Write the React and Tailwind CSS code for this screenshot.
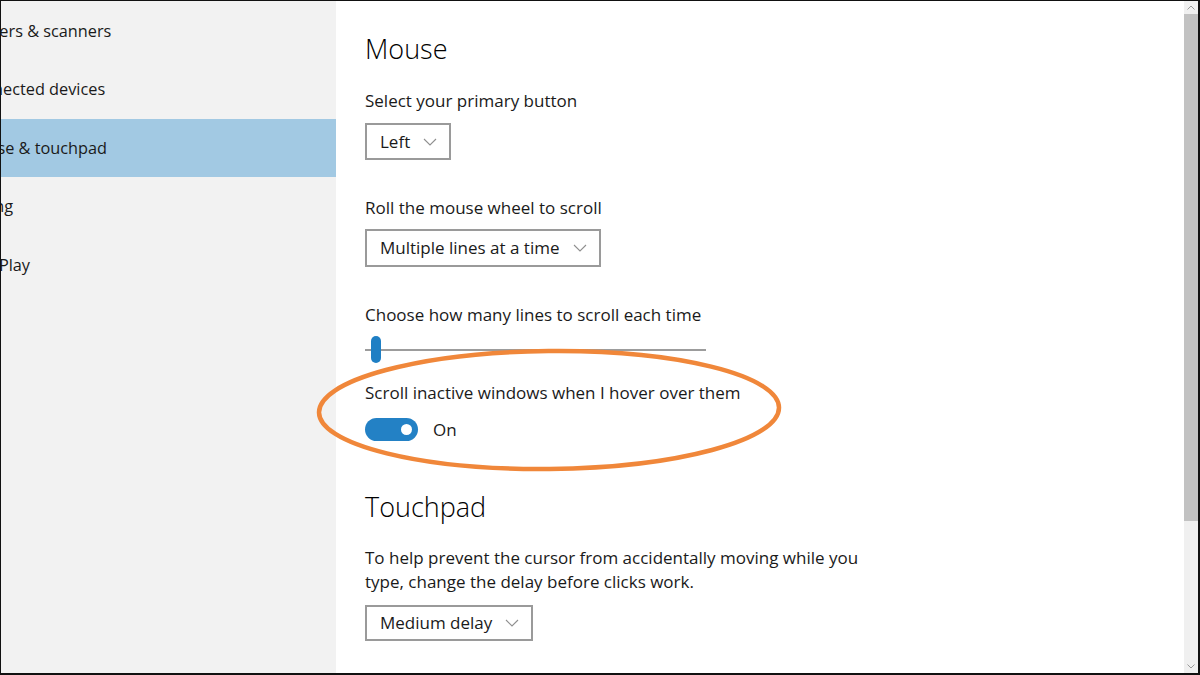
import React from 'react'

const font = { fontFamily: '"Open Sans", "Noto Sans", sans-serif' }

function Chevron() {
  return (
    <svg width="14" height="8" viewBox="0 0 14 8" className="shrink-0">
      <path d="M1 1 L7 7 L13 1" fill="none" stroke="#8f8f8f" strokeWidth="1.1" />
    </svg>
  )
}

function Dropdown({ label, className }) {
  return (
    <div className={`flex w-fit items-center gap-[13px] border-2 border-[#9a9a9a] pl-[13px] pr-[12px] text-[17px] text-[#1a1a1a] ${className}`}>
      <span>{label}</span>
      <Chevron />
    </div>
  )
}

const navItems = ['Printers & scanners', 'Connected devices', 'Mouse & touchpad', 'Typing', 'AutoPlay']

export default function App() {
  return (
    <div style={font} className="relative flex h-[675px] w-[1200px] overflow-hidden border-t border-l border-b-2 border-r-2 border-[#111] bg-white">
      {/* sidebar, scrolled off to the left */}
      <aside className="w-[335px] shrink-0 overflow-hidden bg-[#f2f2f2] pt-[1px]">
        {navItems.map((item, i) => (
          <div
            key={item}
            className={`flex h-[58.4px] items-center whitespace-nowrap text-[16.3px] text-[#1a1a1a] ${i === 2 ? 'bg-[#a2c9e3]' : ''}`}
          >
            <span className="-ml-[38px]">{item}</span>
          </div>
        ))}
      </aside>

      {/* main settings pane */}
      <main className="relative flex-1 pl-[29px] pt-[28px] text-[#1a1a1a]">
        <h1 className="text-[27px] font-light leading-[40px] text-black">Mouse</h1>

        <p className="mt-[19px] text-[17px] leading-[26px]">Select your primary button</p>
        <Dropdown label="Left" className="mt-[9px] h-[37px]" />

        <p className="mt-[35px] text-[17px] leading-[26px]">Roll the mouse wheel to scroll</p>
        <Dropdown label="Multiple lines at a time" className="mt-[8px] h-[38px]" />

        <p className="mt-[35px] text-[17px] leading-[26px]">Choose how many lines to scroll each time</p>
        <div className="relative mt-[8px] h-[28px] w-[341px]">
          <div className="absolute left-0 right-0 top-[13px] h-[2px] bg-[#9c9c9c]" />
          <div className="absolute left-[6px] top-0 h-[27px] w-[10px] rounded-full bg-[#1f7fc4]" />
        </div>

        <p className="mt-[16px] text-[17px] leading-[26px]">Scroll inactive windows when I hover over them</p>
        <div className="mt-[12px] flex h-[23px] items-center gap-[15px]">
          <div className="flex h-[23px] w-[53px] items-center justify-end rounded-full bg-[#2381c5] pr-[6px]">
            <div className="h-[11px] w-[11px] rounded-full bg-white" />
          </div>
          <span className="text-[17px] leading-[23px]">On</span>
        </div>

        <h2 className="mt-[46px] text-[27px] font-light leading-[40px] text-black">Touchpad</h2>
        <p className="mt-[19px] w-[510px] text-[17px] leading-[24px]">
          To help prevent the cursor from accidentally moving while you type, change the delay before clicks work.
        </p>
        <Dropdown label="Medium delay" className="mt-[11px] h-[36px]" />

        {/* hand-drawn highlight ring */}
        <svg className="pointer-events-none absolute left-[-22px] top-[345px]" width="472" height="130" viewBox="0 0 472 130">
          <ellipse cx="235" cy="64" rx="230" ry="59" fill="none" stroke="#f0873a" strokeWidth="4.5" transform="rotate(-0.6 235 64)" />
        </svg>
      </main>

      {/* scrollbar */}
      <div className="flex w-[14px] shrink-0 flex-col bg-[#f0f0f0]">
        <div className="flex h-[13px] items-center justify-center">
          <svg width="8" height="5" viewBox="0 0 8 5"><path d="M0.5 4.5 L4 1 L7.5 4.5" fill="none" stroke="#9a9a9a" /></svg>
        </div>
        <div className="h-[507px] bg-[#c2c2c2]" />
        <div className="flex-1" />
        <div className="flex h-[13px] items-center justify-center">
          <svg width="8" height="5" viewBox="0 0 8 5"><path d="M0.5 0.5 L4 4 L7.5 0.5" fill="none" stroke="#9a9a9a" /></svg>
        </div>
      </div>
    </div>
  )
}
